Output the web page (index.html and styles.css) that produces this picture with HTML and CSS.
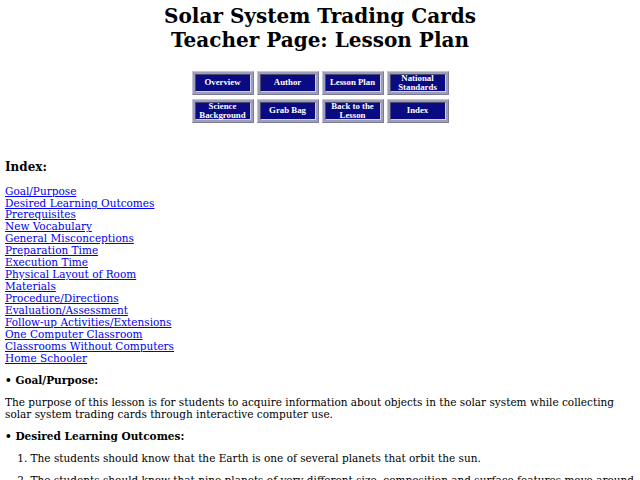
FILE: index.html
```html
<!DOCTYPE html>
<html>
<head>
<meta charset="utf-8">
<title>Solar System Trading Cards - Teacher Page: Lesson Plan</title>
<link rel="stylesheet" href="styles.css">
</head>
<body>
<h1 class="title">Solar System Trading Cards<br>Teacher Page: Lesson Plan</h1>

<nav class="nav">
  <a class="btn" href="#"><span class="btn-face">Overview</span></a>
  <a class="btn" href="#"><span class="btn-face">Author</span></a>
  <a class="btn" href="#"><span class="btn-face">Lesson Plan</span></a>
  <a class="btn" href="#"><span class="btn-face">National<br>Standards</span></a>
  <a class="btn" href="#"><span class="btn-face">Science<br>Background</span></a>
  <a class="btn" href="#"><span class="btn-face">Grab Bag</span></a>
  <a class="btn" href="#"><span class="btn-face">Back to the<br>Lesson</span></a>
  <a class="btn" href="#"><span class="btn-face">Index</span></a>
</nav>

<h3 class="index-title">Index:</h3>
<div class="index-links">
  <a href="#goal">Goal/Purpose</a><br>
  <a href="#outcomes">Desired Learning Outcomes</a><br>
  <a href="#">Prerequisites</a><br>
  <a href="#">New Vocabulary</a><br>
  <a href="#">General Misconceptions</a><br>
  <a href="#">Preparation Time</a><br>
  <a href="#">Execution Time</a><br>
  <a href="#">Physical Layout of Room</a><br>
  <a href="#">Materials</a><br>
  <a href="#">Procedure/Directions</a><br>
  <a href="#">Evaluation/Assessment</a><br>
  <a href="#">Follow-up Activities/Extensions</a><br>
  <a href="#">One Computer Classroom</a><br>
  <a href="#">Classrooms Without Computers</a><br>
  <a href="#">Home Schooler</a>
</div>

<ul class="section" id="goal"><li><b>Goal/Purpose:</b></li></ul>
<p class="text">The purpose of this lesson is for students to acquire information about objects in the solar system while collecting solar system trading cards through interactive computer use.</p>

<ul class="section" id="outcomes"><li><b>Desired Learning Outcomes:</b></li></ul>
<ol class="outcomes">
  <li><p>The students should know that the Earth is one of several planets that orbit the sun.</p></li>
  <li><p>The students should know that nine planets of very different size, composition and surface features move around the sun in nearly circular orbits.</p></li>
</ol>
</body>
</html>
```

FILE: styles.css
```css
html {
  background: #ffffff;
}

body {
  margin: 5px;
  font-family: "DejaVu Serif", serif;
  font-size: 10.5px;
  line-height: 11.92px;
  color: #000000;
}

.title {
  margin: 0;
  text-align: center;
  font-size: 20px;
  line-height: 23.84px;
  font-weight: bold;
}

.nav {
  display: grid;
  grid-template-columns: repeat(4, 62px);
  grid-auto-rows: 24px;
  column-gap: 3px;
  row-gap: 4px;
  justify-content: center;
  margin: 18px 0 38px;
}

.btn {
  display: flex;
  box-sizing: border-box;
  border: 1px solid #7c7c94;
  border-top-color: #c4c4d8;
  border-left-color: #c4c4d8;
  background: #9e9eb8;
  padding: 2px;
  text-decoration: none;
}

.btn-face {
  flex: 1;
  display: flex;
  align-items: center;
  justify-content: center;
  text-align: center;
  background: #0a0a82;
  border: 1px solid #4a4a6e;
  border-bottom-color: #d0d0e0;
  border-right-color: #d0d0e0;
  color: #ffffff;
  font-family: "Liberation Serif", serif;
  font-weight: bold;
  font-size: 8.8px;
  line-height: 8.5px;
}

.index-title {
  margin: 12px 0 11px;
  font-size: 11.98px;
  line-height: 13.95px;
  font-weight: bold;
}

.index-links a {
  color: #0000ee;
}

.section {
  margin: 10.24px 0;
  padding: 0;
  list-style: none;
  font-size: 10.55px;
}

.section li::before {
  content: "\2022\00a0";
  font-weight: bold;
}

.text {
  margin: 10.24px 0;
}

.outcomes {
  margin: 10.24px 0;
  padding-left: 25.6px;
}

.outcomes p {
  margin: 10.24px 0;
}
```
